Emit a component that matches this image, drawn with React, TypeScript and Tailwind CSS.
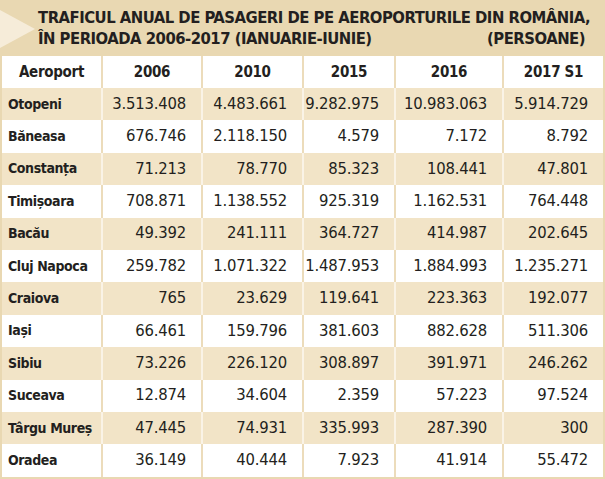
const rows: [string, string, string, string, string, string][] = [
  ["Otopeni", "3.513.408", "4.483.661", "9.282.975", "10.983.063", "5.914.729"],
  ["Băneasa", "676.746", "2.118.150", "4.579", "7.172", "8.792"],
  ["Constanța", "71.213", "78.770", "85.323", "108.441", "47.801"],
  ["Timișoara", "708.871", "1.138.552", "925.319", "1.162.531", "764.448"],
  ["Bacău", "49.392", "241.111", "364.727", "414.987", "202.645"],
  ["Cluj Napoca", "259.782", "1.071.322", "1.487.953", "1.884.993", "1.235.271"],
  ["Craiova", "765", "23.629", "119.641", "223.363", "192.077"],
  ["Iași", "66.461", "159.796", "381.603", "882.628", "511.306"],
  ["Sibiu", "73.226", "226.120", "308.897", "391.971", "246.262"],
  ["Suceava", "12.874", "34.604", "2.359", "57.223", "97.524"],
  ["Târgu Mureș", "47.445", "74.931", "335.993", "287.390", "300"],
  ["Oradea", "36.149", "40.444", "7.923", "41.914", "55.472"],
];

const headers = ["Aeroport", "2006", "2010", "2015", "2016", "2017 S1"];
const widths = ["w-[101px]", "w-[100px]", "w-[101px]", "w-[92px]", "w-[108px]", "w-[99px]"];

export default function App() {
  return (
    <div className="w-[605px] h-[479px] overflow-hidden bg-[#e9d8b2] text-[#231f20] font-['DejaVu_Sans_Condensed',sans-serif]">
      {/* title band */}
      <div className="relative h-[56px] pl-[38px] pr-[20px] pt-[7px]">
        <div className="absolute left-0 top-[10px] w-0 h-0 border-t-[19px] border-b-[19px] border-l-[35px] border-t-transparent border-b-transparent border-l-[#f6ecd9]" />
        <div className="text-[16.5px] font-bold leading-[21px] tracking-[-0.5px] uppercase whitespace-nowrap">
          Traficul anual de pasageri de pe aeroporturile din România,
        </div>
        <div className="flex justify-between text-[16.5px] font-bold leading-[21px] tracking-[-0.5px] uppercase whitespace-nowrap">
          <span>în perioada 2006-2017 (ianuarie-iunie)</span>
          <span>(persoane)</span>
        </div>
      </div>

      <div className="px-[2px]">
        <div className="flex h-[32px] bg-white">
          {headers.map((h, i) => (
            <div
              key={h}
              className={`${widths[i]} flex items-center justify-center text-[15px] font-bold tracking-[-0.3px] ${i < 5 ? "border-r-2 border-[#ecdcbb]" : ""}`}
            >
              {h}
            </div>
          ))}
        </div>
        {rows.map((r, ri) => {
          const beige = ri % 2 === 0;
          return (
            <div key={r[0]} className={`flex h-[32.4px] ${beige ? "bg-[#f2e4c7]" : "bg-white"}`}>
              {r.map((c, i) => (
                <div
                  key={i}
                  className={`${widths[i]} flex items-center whitespace-nowrap ${
                    i === 0
                      ? "pl-[6px] font-bold text-[14px] tracking-[-0.4px]"
                      : "justify-end pr-[15px] text-[16.5px] tracking-[-0.2px]"
                  } ${i < 5 ? (beige ? "border-r-2 border-[#faf3e6]" : "border-r-2 border-[#ecdcbb]") : ""}`}
                >
                  {c}
                </div>
              ))}
            </div>
          );
        })}
      </div>
    </div>
  );
}
